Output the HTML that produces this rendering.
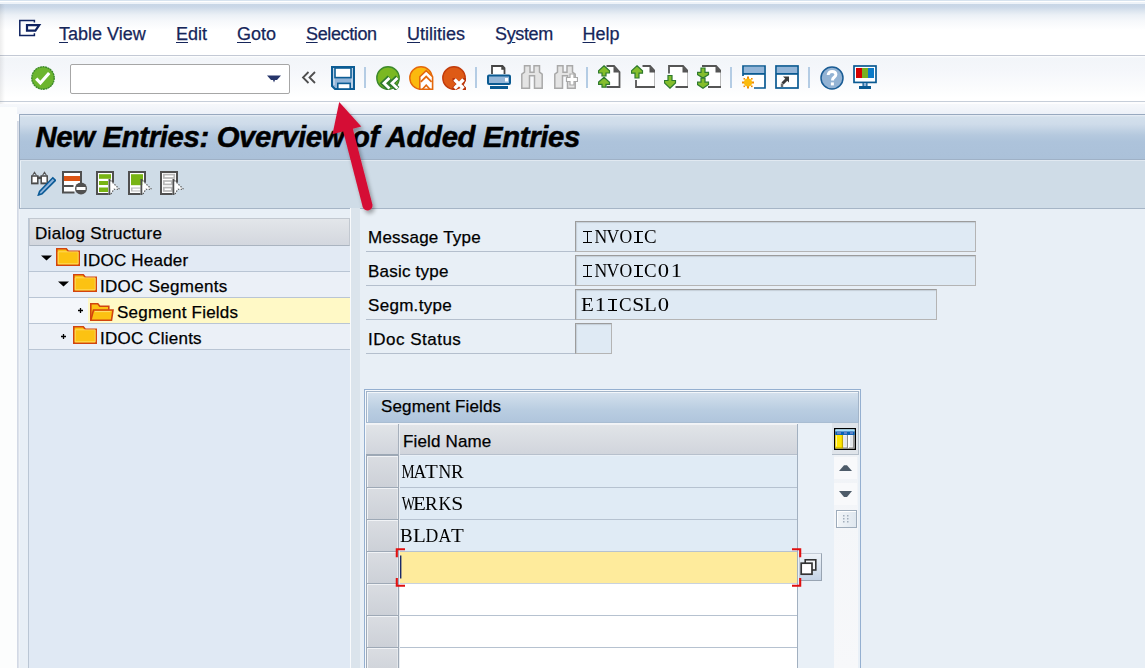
<!DOCTYPE html>
<html><head><meta charset="utf-8">
<style>
*{margin:0;padding:0;box-sizing:border-box}
html,body{width:1145px;height:668px;overflow:hidden;background:#ffffff;font-family:"Liberation Sans",sans-serif}
.a{position:absolute}
.menu{font-size:18px;color:#16265a;-webkit-text-stroke:0.25px #16265a;top:23px;line-height:22px;white-space:nowrap}
.menu u{text-decoration:underline;text-underline-offset:2px;text-decoration-thickness:1px}
.lbl{font-size:17px;letter-spacing:0.22px;color:#000;-webkit-text-stroke:0.25px #000;line-height:20px;white-space:nowrap}
.mono{font-family:"Liberation Serif",serif;font-size:19px;color:#000;line-height:24px;white-space:nowrap}
.mono i{font-style:normal;display:inline-block;width:12.67px;text-align:center}
.mono i.cI{position:relative;height:12.5px;vertical-align:baseline}
.mono i.cI:before{content:"";position:absolute;left:2px;width:9px;top:0;height:12.5px;border-top:1.3px solid #000;border-bottom:1.3px solid #000;box-sizing:border-box}
.mono i.cI:after{content:"";position:absolute;left:5.8px;width:1.5px;top:0;height:12.5px;background:#000}
.inp{background:#dfeaf4;border:1px solid #9c9c9c;border-right-color:#b4b4b4;border-bottom-color:#b4b4b4;box-shadow:inset 1px 1px 1px rgba(0,0,0,0.12)}
.sep{width:2px;height:21px;background:#b4cce4;top:67px}
.rowsel{left:366px;width:33px;background:linear-gradient(#dadde2,#ccd0d7);border:1px solid #9ea9b6;border-bottom:none;box-shadow:inset 1px 1px 0 #f1f3f6,inset -1px 0 0 #e4e7eb}
.hl{height:1px;background:#b4bfcd}
</style></head><body>
<!-- top strip -->
<div class="a" style="left:0;top:0;width:1145px;height:1px;background:#d7e3ef"></div>
<div class="a" style="left:0;top:1px;width:1145px;height:1px;background:#ffffff"></div>
<div class="a" style="left:0;top:2px;width:1145px;height:2px;background:#eef3f9"></div>
<!-- menu bar -->
<div class="a" style="left:0;top:4px;width:1145px;height:51px;background:linear-gradient(#c8d6e6 0px,#cbd8e8 3px,#dce5ef 7px,#ebf0f6 11px,#f6f8fb 17px,#ffffff 26px)"></div>
<div class="a" style="left:0;top:55px;width:1145px;height:1px;background:#c3c9d5"></div>
<!-- toolbar -->
<div class="a" style="left:0;top:56px;width:1145px;height:45px;background:linear-gradient(#ffffff 0px,#f2f5f9 2px,#f5f7fb 16px,#fbfcfd 32px,#ffffff 42px)"></div>
<div class="a" style="left:0;top:101px;width:1145px;height:1px;background:#c6ced9"></div>
<!-- window area -->
<div class="a" style="left:0;top:102px;width:1145px;height:566px;background:#fdfdfe"></div><div class="a" style="left:0;top:4px;width:5px;height:664px;background:linear-gradient(90deg,rgba(0,0,0,0.07),rgba(0,0,0,0))"></div>
<div class="a" style="left:0;top:104px;width:1145px;height:10px;background:linear-gradient(#f6f8fb,#edf1f8)"></div><div class="a" style="left:0;top:107px;width:17px;height:561px;background:#fcfdfd"></div>

<!-- menu icon -->
<svg class="a" style="left:19px;top:19px" width="24" height="18" viewBox="0 0 24 18">
<path d="M15.4 3.6V1.6H0.8V16.4H15.4V14.2" stroke="#0e2260" stroke-width="1.5" fill="none"/>
<path d="M8 6.2H20.2L16.4 11.6H8z" fill="#fff" stroke="#0e2260" stroke-width="2.2"/>
</svg>
<div class="a menu" style="left:59px"><u>T</u>able View</div>
<div class="a menu" style="left:176px"><u>E</u>dit</div>
<div class="a menu" style="left:237px"><u>G</u>oto</div>
<div class="a menu" style="left:306px;letter-spacing:-0.38px"><u>S</u>election</div>
<div class="a menu" style="left:407px"><u>U</u>tilities</div>
<div class="a menu" style="left:495px;letter-spacing:-0.35px">S<u>y</u>stem</div>
<div class="a menu" style="left:582.5px"><u>H</u>elp</div>

<!-- toolbar content -->
<!-- enter (green check) -->
<svg class="a" style="left:31px;top:66px" width="24" height="24" viewBox="0 0 24 24">
<circle cx="12" cy="12" r="11.2" fill="#6cb52e" stroke="#3d8a2c" stroke-width="1.4" stroke-dasharray="2 0.6"/>
<path d="M5.2 12.6l4.2 4.4 8.8-10" fill="none" stroke="#fff" stroke-width="3.2" stroke-linejoin="miter"/>
</svg>
<!-- command field -->
<div class="a" style="left:70px;top:64px;width:220px;height:30px;background:#fff;border:1.5px solid #a6a6a6;border-radius:2px"></div>
<svg class="a" style="left:266px;top:74px" width="16" height="10" viewBox="0 0 16 10">
<path d="M1 1.5h14l-4 4.5h-2l-1 2.5-1-2.5h-2z" fill="#26356a"/>
</svg>
<!-- << -->
<svg class="a" style="left:301px;top:71px" width="16" height="13" viewBox="0 0 16 13">
<path d="M7.5 1L2 6.5l5.5 5.5M14 1L8.5 6.5l5.5 5.5" fill="none" stroke="#4e4e4e" stroke-width="1.8"/>
</svg>
<!-- save -->
<svg class="a" style="left:331px;top:66px" width="24" height="24" viewBox="0 0 24 24">
<path d="M1 1H23V23H4L1 20z" fill="#93b5d8" stroke="#0c5c94" stroke-width="2"/>
<rect x="2" y="2" width="2" height="17" fill="#b9cfe6"/>
<rect x="20" y="2" width="2" height="20" fill="#b9cfe6"/>
<rect x="4" y="2" width="16" height="9.6" fill="#fff" stroke="#0c5c94" stroke-width="1.6"/>
<rect x="6.8" y="17.4" width="12.4" height="5.6" fill="#fff" stroke="#0c5c94" stroke-width="1.6"/>
</svg>
<div class="a sep" style="left:364px"></div>
<!-- back (green) -->
<svg class="a" style="left:376px;top:66px" width="25" height="24" viewBox="0 0 25 24">
<circle cx="12" cy="12" r="11.2" fill="#7ab822" stroke="#3d8a2c" stroke-width="1.4"/>
<path d="M13.5 11.5L7.5 17.2l6 5.8M21.5 11.5l-6 5.7 6 5.8" fill="none" stroke="#2f7a2e" stroke-width="5.4"/>
<path d="M13.5 12L8 17.2l5.5 5.3M21.5 12L16 17.2l5.5 5.3" fill="none" stroke="#fff" stroke-width="2.8"/>
</svg>
<!-- exit (orange) -->
<svg class="a" style="left:409px;top:66px" width="25" height="24" viewBox="0 0 25 24">
<circle cx="12" cy="12" r="11.2" fill="#fbb90e" stroke="#e4680c" stroke-width="1.4"/>
<path d="M10.8 23.2V10.8L17.2 4.6l6.4 6.2v12.4z" fill="#fff" stroke="#e4680c" stroke-width="1.6"/>
<path d="M11.8 15.8L17.2 10.6l5.4 5.2" fill="none" stroke="#e4680c" stroke-width="1.8"/>
<path d="M13.2 23.5L17.2 19.2l4 4.3" fill="none" stroke="#e4680c" stroke-width="1.6"/>
</svg>
<!-- cancel (red) -->
<svg class="a" style="left:442px;top:66px" width="25" height="24" viewBox="0 0 25 24">
<circle cx="12" cy="12" r="11.2" fill="#de5a16" stroke="#c23c0c" stroke-width="1.4"/>
<path d="M10.5 12h3l3.5 3.5 3.5-3.5h3.5v3L20.5 18l3.5 3.5V24h-3l-3.5-3.5L14 24h-3.5v-3L14 18l-3.5-3z" fill="#b8340a"/>
<path d="M12.5 13.5l9 9M21.5 13.5l-9 9" fill="none" stroke="#fff" stroke-width="3.4"/>
</svg>
<div class="a sep" style="left:475px"></div>
<!-- print -->
<svg class="a" style="left:487px;top:65px" width="24" height="25" viewBox="0 0 24 25">
<path d="M5 9V1h10.5l2 2v6" fill="#fff" stroke="#454545" stroke-width="1.8"/>
<path d="M15 1v3h3" fill="#555" stroke="#454545" stroke-width="1.4"/>
<rect x="1" y="10.5" width="22" height="8.5" rx="1" fill="#94b6d8" stroke="#0a5a92" stroke-width="2"/>
<rect x="18" y="13" width="3" height="3.5" fill="#fff"/>
<rect x="3" y="21" width="18" height="3" fill="#0a5a92"/>
</svg>
<!-- find (disabled) -->
<svg class="a" style="left:521px;top:65px" width="22" height="24" viewBox="0 0 22 24">
<path d="M3.5 0.8h5.5v6.4h4V0.8h5.5v6.4l2.7 2v14H13.5V10.8h-5V23.2H0.8v-14l2.7-2z" fill="#e4e4e4" stroke="#a9a9a9" stroke-width="1.5"/>
</svg>
<svg class="a" style="left:554px;top:65px" width="24" height="24" viewBox="0 0 24 24">
<path d="M3.5 0.8h5.5v6.4h4V0.8h5.5v6.4l2.7 2v14H13.5V10.8h-5V23.2H0.8v-14l2.7-2z" fill="#e4e4e4" stroke="#a9a9a9" stroke-width="1.5"/>
<path d="M16 9h4v3.5h3.5v4H20V20h-4v-3.5h-3.5v-4H16z" fill="#fff" stroke="#a9a9a9" stroke-width="1.2"/>
</svg>
<div class="a sep" style="left:586px"></div>
<!-- first page -->
<svg class="a" style="left:598px;top:65px" width="24" height="24" viewBox="0 0 24 24">
<path d="M8.5 1H16l5.5 6v15H8.5" fill="#fff" stroke="#555" stroke-width="1.8"/>
<path d="M15.5 1v6.5h6z" fill="#555"/>
<path d="M6 0.8l5.5 5v2.2H8v3H4v-3H0.5V5.8z" fill="#84be2c" stroke="#2e7a2e" stroke-width="1.2"/>
<path d="M6 12.2l5.5 5v2.2H8v2.8H4v-2.8H0.5v-2.2z" fill="#84be2c" stroke="#2e7a2e" stroke-width="1.2"/>
</svg>
<!-- prev page -->
<svg class="a" style="left:631px;top:65px" width="24" height="24" viewBox="0 0 24 24">
<path d="M5 15v7h19.5V7L19 1H11.5" fill="#fff" stroke="#555" stroke-width="1.8"/>
<path d="M18.5 1v6.5h6z" fill="#555"/>
<path d="M6 0.8l5.5 5v2.4H8v4.8H4V8.2H0.5V5.8z" fill="#84be2c" stroke="#2e7a2e" stroke-width="1.2"/>
</svg>
<!-- next page -->
<svg class="a" style="left:664px;top:65px" width="24" height="24" viewBox="0 0 24 24">
<path d="M5 8.5V1H19l5.5 6v15H11.5" fill="#fff" stroke="#555" stroke-width="1.8"/>
<path d="M18.5 1v6.5h6z" fill="#555"/>
<path d="M4 10.5h4v5h3.5v2.4L6 23.2 0.5 17.9v-2.4H4z" fill="#84be2c" stroke="#2e7a2e" stroke-width="1.2"/>
</svg>
<!-- last page -->
<svg class="a" style="left:697px;top:65px" width="24" height="24" viewBox="0 0 24 24">
<path d="M5 1H19l5.5 6v15H11" fill="#fff" stroke="#555" stroke-width="1.8"/>
<path d="M18.5 1v6.5h6z" fill="#555"/>
<path d="M4 3h4v4.3h3.5v2.3L6 13 0.5 9.6V7.3H4z" fill="#84be2c" stroke="#2e7a2e" stroke-width="1.2"/>
<path d="M4 13.2h4v4h3.5v2.3L6 23.2 0.5 19.5v-2.3H4z" fill="#84be2c" stroke="#2e7a2e" stroke-width="1.2"/>
</svg>
<div class="a sep" style="left:730px"></div>
<!-- new session -->
<svg class="a" style="left:742px;top:65px" width="24" height="24" viewBox="0 0 24 24">
<path d="M1 11V1h22v22H12" fill="#fff" stroke="#0a5a92" stroke-width="1.7"/>
<rect x="2" y="2" width="20" height="6.5" fill="#93b5d8"/>
<rect x="1" y="8" width="22" height="1.8" fill="#0a5a92"/>
<g fill="#f08c00"><rect x="5" y="11.5" width="2" height="12"/><rect x="0" y="16.5" width="12" height="2"/></g>
<circle cx="6" cy="17.5" r="4" fill="#fbbb0c"/>
<g fill="#f08c00"><rect x="1.5" y="13" width="1.6" height="1.6"/><rect x="9" y="13" width="1.6" height="1.6"/><rect x="1.5" y="20.5" width="1.6" height="1.6"/><rect x="9" y="20.5" width="1.6" height="1.6"/></g>
</svg>
<!-- shortcut -->
<svg class="a" style="left:775px;top:65px" width="24" height="24" viewBox="0 0 24 24">
<rect x="1" y="1" width="22" height="22" fill="#fff" stroke="#0a5a92" stroke-width="1.7"/>
<rect x="2" y="2" width="20" height="6.5" fill="#93b5d8"/>
<rect x="1" y="8" width="22" height="1.8" fill="#0a5a92"/>
<path d="M8 11.5h6v6z" fill="#3a3a3a"/>
<path d="M12.5 13.5L7.5 18.5" stroke="#3a3a3a" stroke-width="3"/>
<path d="M7 18.5v3.5" stroke="#707070" stroke-width="2.4"/>
</svg>
<div class="a sep" style="left:808px"></div>
<!-- help -->
<svg class="a" style="left:820px;top:66px" width="24" height="24" viewBox="0 0 24 24">
<circle cx="12" cy="12" r="11" fill="#93b3d4" stroke="#1a5c94" stroke-width="1.5"/>
<path d="M8.2 9c0-2.4 1.8-3.6 3.9-3.6 2.3 0 3.8 1.4 3.8 3.2 0 2.6-3.3 2.6-3.3 5v0.8" fill="none" stroke="#fff" stroke-width="3"/>
<rect x="10.9" y="16.4" width="3" height="3" fill="#fff"/>
</svg>
<!-- monitor -->
<svg class="a" style="left:853px;top:65px" width="24" height="24" viewBox="0 0 24 24">
<rect x="1" y="1" width="22" height="16.4" fill="#fff" stroke="#0a5a92" stroke-width="1.7"/>
<rect x="3" y="3" width="6" height="10" fill="#d40000"/>
<rect x="9" y="3" width="6" height="10" fill="#78b020"/>
<rect x="15" y="3" width="6" height="10" fill="#0a7ac8"/>
<rect x="9.5" y="18" width="5" height="3" fill="#0a5a92"/>
<rect x="10.7" y="18" width="2.6" height="3" fill="#93b5d8"/>
<rect x="6" y="21" width="12" height="3" fill="#0a5a92"/>
</svg>


<!-- panel -->
<div class="a" style="left:17px;top:121px;width:1px;height:547px;background:#d3d9e5"></div><div class="a" style="left:18px;top:121px;width:1px;height:547px;background:#dce2eb"></div>
<div class="a" style="left:19px;top:114px;width:1126px;height:1px;background:#98a9bf"></div>
<div class="a" style="left:19px;top:114px;width:1px;height:95px;background:#9cadc2"></div>
<div class="a" style="left:20px;top:115px;width:1125px;height:44px;background:linear-gradient(#e9eff6 0px,#d3e0ec 2px,#cfdcea 9px,#b5c9de 20px,#adc3db 27px,#abc1d9 44px)"></div>
<div class="a" style="left:20px;top:159px;width:1125px;height:1px;background:#9fb1c6"></div>
<div class="a" style="left:20px;top:160px;width:1125px;height:1px;background:#e1e9f1"></div>
<div class="a" style="left:20px;top:161px;width:1125px;height:47px;background:#cfdce7"></div>
<div class="a" style="left:19px;top:208px;width:1126px;height:1px;background:#a6b5c6"></div>
<div class="a" style="left:19px;top:209px;width:1126px;height:459px;background:#e8eff6"></div>
<div class="a" style="left:19px;top:209px;width:1px;height:459px;background:#eef2f7"></div><div class="a" style="left:20px;top:161px;width:1px;height:47px;background:#e9f0f6"></div>

<div class="a" style="left:35.5px;top:118.5px;font-size:29.3px;font-weight:bold;font-style:italic;color:#000;line-height:36px;letter-spacing:-0.34px;-webkit-text-stroke:0.5px #000;white-space:nowrap">New Entries: Overview of Added Entries</div>

<!-- display/change (glasses + pencil) -->
<svg class="a" style="left:31px;top:171px" width="25" height="25" viewBox="0 0 25 25">
<path d="M1.5 4.5L3.5 1.2 5.5 4.5M11.5 4.5L13.5 1.2 15.5 4.5" fill="none" stroke="#555" stroke-width="1.1"/>
<rect x="0.8" y="5" width="6" height="7.6" fill="#fff" stroke="#4a4a4a" stroke-width="1.5"/>
<rect x="10.2" y="5" width="6" height="7.6" fill="#fff" stroke="#4a4a4a" stroke-width="1.5"/>
<rect x="6" y="5.5" width="5" height="2.6" fill="#4a4a4a"/>
<rect x="1.5" y="11.5" width="4.5" height="1.5" fill="#4a4a4a"/><rect x="11" y="11.5" width="4.5" height="1.5" fill="#4a4a4a"/>
<path d="M21.8 6.8l2.6 2.6L11 22.8l-3.6 1.2 1.2-3.6z" fill="#8fb4dc" stroke="#0a5a96" stroke-width="1.6"/>
</svg>
<!-- delete row -->
<svg class="a" style="left:62px;top:171px" width="26" height="25" viewBox="0 0 26 25">
<path d="M12.5 21.5H1V1h18v11" fill="#fff" stroke="#505050" stroke-width="2"/>
<rect x="2" y="5" width="16" height="5" fill="#dd5514"/>
<rect x="2" y="14" width="9.5" height="2" fill="#505050"/>
<circle cx="19" cy="17.5" r="6" fill="#505050"/>
<rect x="14.5" y="16" width="9" height="3" fill="#fff"/>
</svg>
<!-- select all -->
<svg class="a" style="left:96px;top:171px" width="25" height="25" viewBox="0 0 25 25">
<path d="M12.5 23H1V1h16v10.5" fill="#fff" stroke="#505050" stroke-width="2"/>
<rect x="3" y="3.2" width="12" height="4.6" fill="#78b414"/>
<rect x="3" y="10" width="9" height="4" fill="#78b414"/>
<rect x="3" y="16.5" width="9" height="4.5" fill="#78b414"/>
<rect x="12.5" y="8" width="2" height="16" fill="#505050"/>
<path d="M14.5 9.5L23.5 18.2H18L14.5 23.5z" fill="#fff"/>
<path d="M14.5 9.5L23.5 18.2H18L14.5 23.5" fill="none" stroke="#404040" stroke-width="1.1" stroke-dasharray="1.3 1.5"/>
</svg>
<!-- select block -->
<svg class="a" style="left:128px;top:171px" width="25" height="25" viewBox="0 0 25 25">
<path d="M12.5 23H1V1h16v10.5" fill="#fff" stroke="#505050" stroke-width="2"/>
<rect x="3" y="3.2" width="12" height="11" fill="#78b414"/>
<rect x="3" y="16.5" width="9.5" height="4" fill="#bcbcbc"/>
<rect x="4.5" y="17.6" width="8" height="1.8" fill="#fff"/>
<rect x="12.5" y="8" width="2" height="16" fill="#505050"/>
<path d="M14.5 9.5L23.5 18.2H18L14.5 23.5z" fill="#fff"/>
<path d="M14.5 9.5L23.5 18.2H18L14.5 23.5" fill="none" stroke="#404040" stroke-width="1.1" stroke-dasharray="1.3 1.5"/>
</svg>
<!-- deselect all -->
<svg class="a" style="left:160px;top:171px" width="25" height="25" viewBox="0 0 25 25">
<path d="M12.5 23H1V1h16v10.5" fill="#fff" stroke="#505050" stroke-width="2"/>
<g fill="none" stroke="#b8b8b8" stroke-width="1.7"><rect x="3.8" y="3.6" width="10.5" height="3.4"/><rect x="3.8" y="10" width="8" height="3.4"/><rect x="3.8" y="16.6" width="8" height="3.4"/></g>
<rect x="12.5" y="8" width="2" height="16" fill="#505050"/>
<path d="M14.5 9.5L23.5 18.2H18L14.5 23.5z" fill="#fff"/>
<path d="M14.5 9.5L23.5 18.2H18L14.5 23.5" fill="none" stroke="#404040" stroke-width="1.1" stroke-dasharray="1.3 1.5"/>
</svg>

<!-- dialog structure -->
<div class="a" style="left:28px;top:218px;width:322px;height:450px;background:#e0e9f4;border-left:1px solid #bac6d4"></div>
<div class="a" style="left:29px;top:218px;width:321px;height:28px;background:linear-gradient(#e3e6ea,#d3d7de);border:1px solid #c2c8d0;border-bottom-color:#aab4c0"></div>
<div class="a lbl" style="left:35px;top:224px;letter-spacing:0.33px">Dialog Structure</div>
<div class="a" style="left:29px;top:246px;width:321px;height:25px;background:#e2eaf4"></div>
<div class="a" style="left:29px;top:271px;width:321px;height:1px;background:#b9c5d4"></div>
<div class="a" style="left:29px;top:272px;width:321px;height:25px;background:#ebf0f7"></div>
<div class="a" style="left:29px;top:297px;width:321px;height:1px;background:#b9c5d4"></div>
<div class="a" style="left:29px;top:298px;width:321px;height:25px;background:#f4f7fb"></div>
<div class="a" style="left:88px;top:298px;width:262px;height:25px;background:#fff9c6"></div>
<div class="a" style="left:29px;top:323px;width:321px;height:1px;background:#b9c5d4"></div>
<div class="a" style="left:29px;top:324px;width:321px;height:25px;background:#ebf0f7"></div>
<div class="a" style="left:29px;top:349px;width:321px;height:1px;background:#b9c5d4"></div>
<div class="a" style="left:350px;top:208px;width:1px;height:460px;background:#f8fafc"></div>
<div class="a" style="left:351px;top:208px;width:9px;height:460px;background:#dbe4ec"></div>
<svg class="a" style="left:41px;top:254.5px" width="12" height="7" viewBox="0 0 12 7"><path d="M0 0.5h11l-5.5 5z" fill="#000"/></svg>
<svg class="a" style="left:56px;top:248px" width="24" height="18" viewBox="0 0 24 18">
<path d="M0.8 17.2V0.8h9.5l2 2.5h10.9v13.9z" fill="#fcc212" stroke="#d2440e" stroke-width="1.6"/>
<path d="M2.2 15.8V3.8h20V15.8z" fill="none" stroke="#ffe070" stroke-width="0.8"/>
</svg>
<div class="a lbl" style="left:83px;top:251px">IDOC Header</div>
<svg class="a" style="left:58px;top:280.5px" width="12" height="7" viewBox="0 0 12 7"><path d="M0 0.5h11l-5.5 5z" fill="#000"/></svg>
<svg class="a" style="left:73px;top:274px" width="24" height="18" viewBox="0 0 24 18">
<path d="M0.8 17.2V0.8h9.5l2 2.5h10.9v13.9z" fill="#fcc212" stroke="#d2440e" stroke-width="1.6"/>
<path d="M2.2 15.8V3.8h20V15.8z" fill="none" stroke="#ffe070" stroke-width="0.8"/>
</svg>
<div class="a lbl" style="left:100px;top:277px;letter-spacing:0.3px">IDOC Segments</div>
<svg class="a" style="left:78px;top:308px" width="5" height="5" viewBox="0 0 5 5"><path d="M2.5 0v5M0 2.5h5" stroke="#000" stroke-width="1.3"/></svg>
<svg class="a" style="left:90px;top:303px" width="24" height="18" viewBox="0 0 24 18">
<path d="M0.8 17.2V0.8h7l2 2.5h9v3.5" fill="#fcc212" stroke="#d2440e" stroke-width="1.6"/>
<path d="M3.5 7h19.5l-1.5 10.2H0.8z" fill="#fcc212" stroke="#d2440e" stroke-width="1.6"/>
<path d="M5 8.6h15.5" stroke="#ffe070" stroke-width="1"/>
</svg>
<div class="a lbl" style="left:117px;top:303px">Segment Fields</div>
<svg class="a" style="left:61px;top:334px" width="5" height="5" viewBox="0 0 5 5"><path d="M2.5 0v5M0 2.5h5" stroke="#000" stroke-width="1.3"/></svg>
<svg class="a" style="left:73px;top:326px" width="24" height="18" viewBox="0 0 24 18">
<path d="M0.8 17.2V0.8h9.5l2 2.5h10.9v13.9z" fill="#fcc212" stroke="#d2440e" stroke-width="1.6"/>
<path d="M2.2 15.8V3.8h20V15.8z" fill="none" stroke="#ffe070" stroke-width="0.8"/>
</svg>
<div class="a lbl" style="left:100px;top:329px">IDOC Clients</div>


<!-- form -->
<div class="a lbl" style="left:368px;top:228px">Message Type</div>
<div class="a lbl" style="left:368px;top:262px">Basic type</div>
<div class="a lbl" style="left:368px;top:296px;letter-spacing:0.3px">Segm.type</div>
<div class="a lbl" style="left:368px;top:330px;letter-spacing:0.5px">IDoc Status</div>
<div class="a hl" style="left:366px;top:251px;width:209px"></div>
<div class="a hl" style="left:366px;top:285px;width:209px"></div>
<div class="a hl" style="left:366px;top:319px;width:209px"></div>
<div class="a hl" style="left:366px;top:353px;width:209px"></div>
<div class="a inp" style="left:575px;top:221px;width:401px;height:31px"></div>
<div class="a inp" style="left:575px;top:255px;width:401px;height:31px"></div>
<div class="a inp" style="left:575px;top:289px;width:362px;height:31px"></div>
<div class="a inp" style="left:575px;top:323px;width:37px;height:31px"></div>
<div class="a mono" style="left:581px;top:225px"><i class="cI"></i><i style="transform:scaleX(0.929)">N</i><i style="transform:scaleX(0.929)">V</i><i style="transform:scaleX(0.929)">O</i><i class="cI"></i><i style="transform:scaleX(0.994)">C</i></div>
<div class="a mono" style="left:581px;top:259px"><i class="cI"></i><i style="transform:scaleX(0.929)">N</i><i style="transform:scaleX(0.929)">V</i><i style="transform:scaleX(0.929)">O</i><i class="cI"></i><i style="transform:scaleX(0.994)">C</i><i style="transform:scaleX(1.188)">0</i><i style="transform:scaleX(1.188)">1</i></div>
<div class="a mono" style="left:581px;top:293px"><i style="transform:scaleX(1.102)">E</i><i style="transform:scaleX(1.188)">1</i><i class="cI"></i><i style="transform:scaleX(0.994)">C</i><i style="transform:scaleX(1.134)">S</i><i style="transform:scaleX(1.102)">L</i><i style="transform:scaleX(1.188)">0</i></div>

<!-- table -->
<div class="a" style="left:364px;top:389px;width:497px;height:279px;border:1px solid #94afd0;border-bottom:none;background:#e9f0f7"></div>
<div class="a" style="left:365px;top:390px;width:495px;height:1px;background:#f6f9fc"></div><div class="a" style="left:365px;top:390px;width:1px;height:278px;background:#f6f9fc"></div><div class="a" style="left:366px;top:391px;width:493px;height:32px;border:1px solid #a2b4c8;border-bottom:1px solid #a9bdd2;background:linear-gradient(#d5e1ed,#b9cde1 60%,#b0c5dc);box-shadow:inset 1px 1px 0 #f2f6fa"></div>
<div class="a" style="left:381px;top:397px;font-size:17px;color:#000;-webkit-text-stroke:0.25px #000;line-height:20px;letter-spacing:0.15px;white-space:nowrap">Segment Fields</div>
<div class="a" style="left:366px;top:423px;width:432px;height:1px;background:#f2f4f7"></div>
<div class="a" style="left:366px;top:424px;width:432px;height:31px;background:linear-gradient(#e1e4e8,#d1d5dc);border-top:1px solid #f0f2f5;border-bottom:1px solid #b7c0cc"></div><div class="a" style="left:366px;top:454px;width:32px;height:2px;background:#9ba7b4"></div>
<div class="a" style="left:398px;top:424px;width:1px;height:244px;background:#a6b0bc"></div><div class="a" style="left:399px;top:424px;width:1px;height:244px;background:#e9edf2"></div>
<div class="a" style="left:797px;top:424px;width:1px;height:244px;background:#a2b0c0"></div>
<div class="a" style="left:403px;top:431.5px;font-size:17px;color:#000;-webkit-text-stroke:0.25px #000;line-height:20px;letter-spacing:0.15px;white-space:nowrap">Field Name</div>
<div class="a" style="left:400px;top:456px;width:397px;height:95px;background:#e0ebf5"></div>
<div class="a" style="left:400px;top:551px;width:397px;height:32px;background:#feeb9c"></div>
<div class="a" style="left:400px;top:583px;width:397px;height:85px;background:#ffffff"></div>
<div class="a hl" style="left:400px;top:487px;width:397px;background:#b6c2d0"></div>
<div class="a hl" style="left:400px;top:519px;width:397px;background:#b6c2d0"></div>
<div class="a hl" style="left:400px;top:551px;width:397px;background:#b6c2d0"></div>
<div class="a hl" style="left:400px;top:583px;width:397px;background:#c9d2dd"></div>
<div class="a hl" style="left:400px;top:615px;width:397px;background:#b6c2d0"></div>
<div class="a hl" style="left:400px;top:647px;width:397px;background:#b6c2d0"></div>
<div class="a rowsel" style="top:455px;height:33px"></div>
<div class="a rowsel" style="top:487px;height:33px"></div>
<div class="a rowsel" style="top:519px;height:33px"></div>
<div class="a rowsel" style="top:551px;height:33px"></div>
<div class="a rowsel" style="top:583px;height:33px"></div>
<div class="a rowsel" style="top:615px;height:33px"></div>
<div class="a rowsel" style="top:647px;height:33px"></div>
<div class="a mono" style="left:400px;top:460px"><i style="transform:scaleX(0.778)">M</i><i style="transform:scaleX(0.929)">A</i><i style="transform:scaleX(1.102)">T</i><i style="transform:scaleX(0.929)">N</i><i style="transform:scaleX(0.994)">R</i></div>
<div class="a mono" style="left:400px;top:492px"><i style="transform:scaleX(0.734)">W</i><i style="transform:scaleX(1.102)">E</i><i style="transform:scaleX(0.994)">R</i><i style="transform:scaleX(0.929)">K</i><i style="transform:scaleX(1.134)">S</i></div>
<div class="a mono" style="left:400px;top:524px"><i style="transform:scaleX(0.994)">B</i><i style="transform:scaleX(1.102)">L</i><i style="transform:scaleX(0.929)">D</i><i style="transform:scaleX(0.929)">A</i><i style="transform:scaleX(1.102)">T</i></div>
<!-- focus brackets -->
<svg class="a" style="left:395px;top:548px;z-index:5" width="407" height="40" viewBox="0 0 407 40">
<path d="M10 1.2H1.8v8M1.8 30v7.8H10M397 1.2h8.2v8M405.2 30v7.8H397" fill="none" stroke="#e01010" stroke-width="2.1"/>
<rect x="5" y="7.5" width="1.4" height="23" fill="#1a2a6a"/>
</svg>
<!-- F4 button -->
<div class="a" style="left:799px;top:553px;width:23px;height:28px;background:linear-gradient(#eef3f8,#c5d4e6);border:1px solid #c4ccd6;border-right-color:#98a4b2;border-bottom-color:#98a4b2"></div>
<svg class="a" style="left:799px;top:556px" width="20" height="20" viewBox="0 0 20 20">
<rect x="6.2" y="3.8" width="10.6" height="10.2" fill="#f4f6f8" stroke="#333" stroke-width="1.6"/>
<rect x="2.2" y="7.2" width="10.8" height="11" fill="#fff" stroke="#333" stroke-width="1.7"/>
</svg>
<!-- config button -->
<div class="a" style="left:832px;top:423px;width:27px;height:32px;background:#dfe4ea;border-right:1px solid #b5bfca;border-bottom:1px solid #b5bfca"></div>
<svg class="a" style="left:834px;top:428px" width="22" height="22" viewBox="0 0 22 22">
<rect x="0.7" y="0.7" width="20.6" height="20.6" fill="#fff" stroke="#000" stroke-width="1.4"/>
<rect x="1.4" y="1.4" width="19.2" height="2" fill="#a4e0fc"/>
<rect x="1.4" y="3.4" width="19.2" height="3.6" fill="#0862b4"/>
<rect x="3" y="3.6" width="4" height="2.6" fill="#5f82c6"/><rect x="10" y="3.6" width="3" height="2.6" fill="#5f82c6"/><rect x="16" y="3.6" width="3" height="2.6" fill="#5f82c6"/>
<rect x="1.4" y="7" width="7.6" height="13.6" fill="#c2aa00"/>
<rect x="1.4" y="7" width="6.4" height="12.4" fill="#ffe600"/>
<rect x="2" y="7.5" width="1" height="11" fill="#fff3a0"/>
<rect x="9" y="7" width="5" height="13.6" fill="#8e8e8e"/>
<rect x="9.2" y="7" width="3.6" height="12.4" fill="#fff"/><rect x="10.2" y="7.5" width="2.2" height="11" fill="#e2e6ec"/>
<rect x="15" y="7" width="5.6" height="13.6" fill="#8e8e8e"/>
<rect x="15" y="7" width="3.8" height="12.4" fill="#fff"/><rect x="16" y="7.5" width="2.4" height="11" fill="#e2e6ec"/>
</svg>
<!-- scrollbar -->
<div class="a" style="left:834px;top:455px;width:24px;height:213px;background:linear-gradient(#eff2f6,#f4f6f9 30%,#f7f8fa)"></div>
<div class="a" style="left:834px;top:457px;width:23px;height:22px;background:#f8f9fb"></div>
<div class="a" style="left:834px;top:483px;width:23px;height:22px;background:#f8f9fb"></div>
<svg class="a" style="left:839px;top:465px" width="13" height="7" viewBox="0 0 13 7"><path d="M5 0.3h3L13 6H0z" fill="#4d5b69"/></svg>
<svg class="a" style="left:839px;top:490.5px" width="13" height="7" viewBox="0 0 13 7"><path d="M0 0h13L8 6H5z" fill="#4d5b69"/></svg>
<div class="a" style="left:836px;top:510px;width:21px;height:18px;background:linear-gradient(90deg,#f2f5f8,#dfe7ef);border:1px solid #9eacbb;box-shadow:inset 1px 1px 0 #fff"></div>
<svg class="a" style="left:842px;top:514px" width="9" height="10" viewBox="0 0 9 10"><g fill="#a2aebb"><rect x="1" y="1" width="1.5" height="1.5"/><rect x="5" y="1" width="1.5" height="1.5"/><rect x="1" y="4" width="1.5" height="1.5"/><rect x="5" y="4" width="1.5" height="1.5"/><rect x="1" y="7" width="1.5" height="1.5"/><rect x="5" y="7" width="1.5" height="1.5"/></g></svg>


<svg class="a" style="left:0;top:0;overflow:visible" width="1145" height="668" viewBox="0 0 1145 668">
<defs><filter id="sh" x="-50%" y="-50%" width="200%" height="200%"><feGaussianBlur in="SourceAlpha" stdDeviation="2"/><feOffset dx="1.5" dy="2.5"/><feComponentTransfer><feFuncA type="linear" slope="0.35"/></feComponentTransfer><feMerge><feMergeNode/><feMergeNode in="SourceGraphic"/></feMerge></filter></defs>
<g filter="url(#sh)">
<path d="M347.5 128L367.5 205.5" stroke="#d50f35" stroke-width="10" stroke-linecap="round"/>
<path d="M339.2 102.1L361.3 126.4L332.5 134.3z" fill="#d50f35"/>
</g>
</svg>

</body></html>
